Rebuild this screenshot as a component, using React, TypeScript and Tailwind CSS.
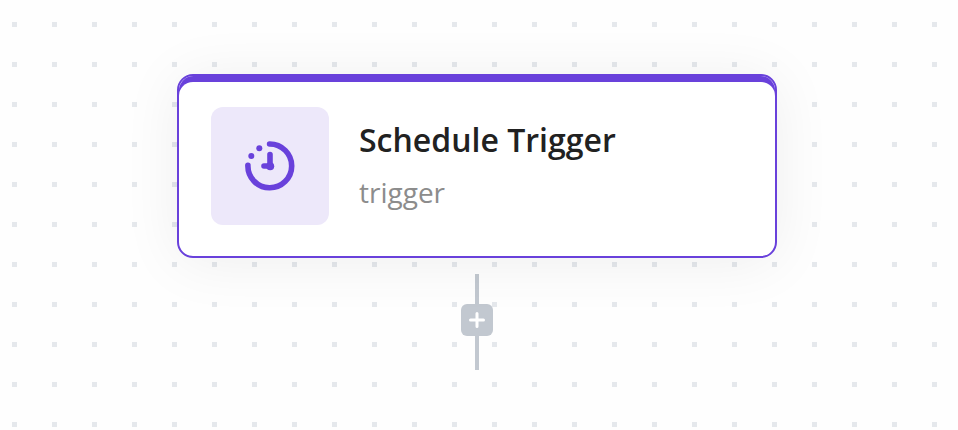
function ScheduleIcon() {
  return (
    <svg width="118" height="118" viewBox="0 0 118 118" fill="none" stroke="#6941db" strokeWidth="5.6" strokeLinecap="round" strokeLinejoin="round">
      <path d="M58.6 37A21.9 21.9 0 1 1 36.9 58.2" />
      <path d="M59 47.5V59H53" />
      <circle cx="59.2" cy="59.2" r="4" fill="#6941db" stroke="none" />
      <circle cx="48.3" cy="41.3" r="3" fill="#6941db" stroke="none" />
      <circle cx="40.3" cy="49.1" r="3" fill="#6941db" stroke="none" />
    </svg>
  );
}

function TriggerNode() {
  return (
    <div className="relative flex h-[184px] w-[600px] gap-[30px] rounded-2xl border-2 border-[#6941db] bg-white pt-[31px] pl-8 shadow-[0_4px_60px_rgba(0,0,0,0.065)]">
      <div className="pointer-events-none absolute inset-x-0 top-0 rounded-t-[14.4px] bg-[#6941db] pt-[6px]">
        <div className="h-[14px] rounded-t-[14px] bg-white" />
      </div>
      <div className="size-[118px] shrink-0 rounded-xl bg-[#ede8fa]">
        <ScheduleIcon />
      </div>
      <div className="flex flex-col pt-[11px]">
        <div className="text-[32px] leading-[44px] font-semibold text-[#212121]">Schedule Trigger</div>
        <div className="mt-[10px] text-[28px] leading-[40px] text-[#8c8c8c]">trigger</div>
      </div>
    </div>
  );
}

function AddConnector() {
  return (
    <div className="mt-4 flex flex-col items-center">
      <div className="h-[30px] w-1 bg-[#c2c8d0]" />
      <button className="flex size-8 items-center justify-center rounded-md bg-[#c2c8d0]">
        <svg width="16" height="16" viewBox="0 0 16 16" stroke="#fff" strokeWidth="3" strokeLinecap="round">
          <path d="M8 1.5V14.5M1.5 8H14.5" />
        </svg>
      </button>
      <div className="h-[34px] w-1 bg-[#c2c8d0]" />
    </div>
  );
}

export default function App() {
  return (
    <div className="h-[430px] w-[958px] overflow-hidden bg-[#fefefe] bg-[linear-gradient(#fefefe_35px,transparent_35px),linear-gradient(90deg,#fefefe_35px,#e5e8ec_35px)] bg-[size:40px_40px] bg-[position:-23px_-13px] pt-[74px] pl-[177px] font-['Open_Sans','Noto_Sans',sans-serif] antialiased">
      <div className="flex w-[600px] flex-col items-center">
        <TriggerNode />
        <AddConnector />
      </div>
    </div>
  );
}
